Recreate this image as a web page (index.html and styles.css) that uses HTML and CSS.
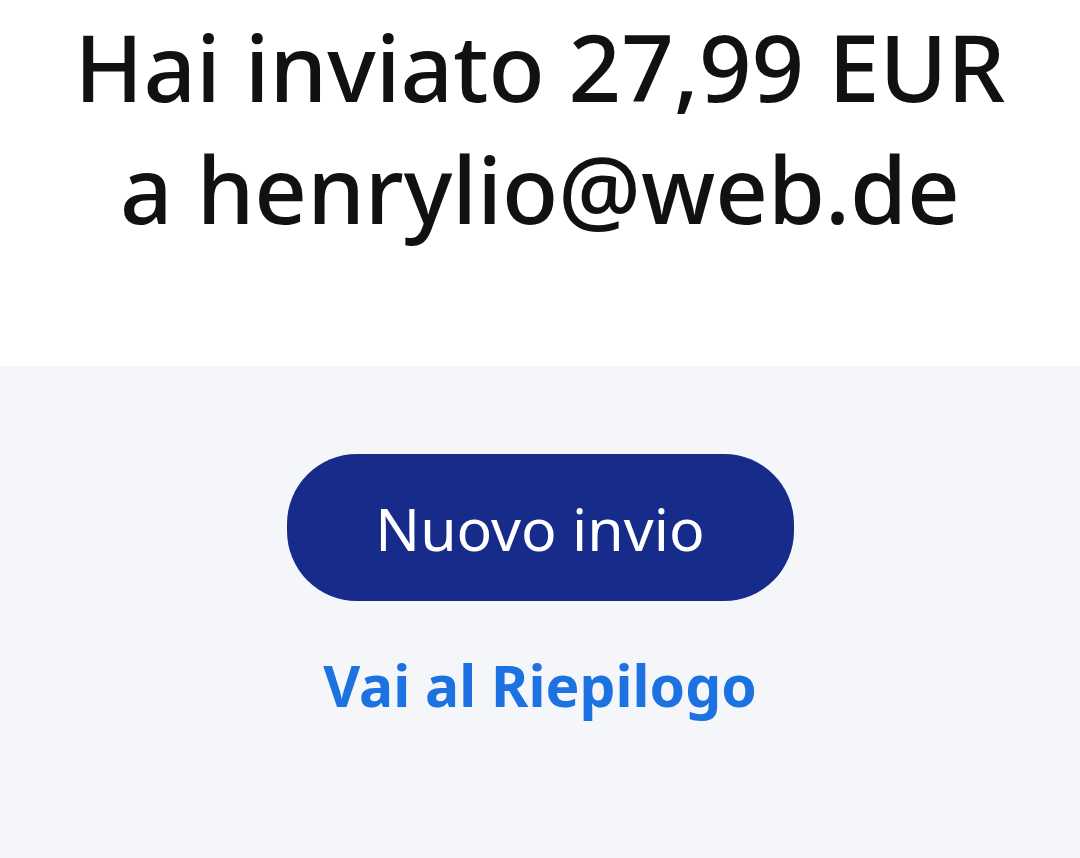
FILE: index.html
```html
<!DOCTYPE html>
<html lang="it">
<head>
    <meta charset="UTF-8">
    <meta name="viewport" content="width=device-width, initial-scale=1.0">
    <title>Invio completato</title>
    <link rel="stylesheet" href="styles.css">
</head>
<body>
    <div class="top">
        <h1 class="title">Hai inviato 27,99 EUR<br>a henrylio@web.de</h1>
    </div>
    <div class="actions">
        <button type="button" class="btn">Nuovo invio</button>
        <a href="#" class="link">Vai al Riepilogo</a>
    </div>
</body>
</html>
```

FILE: styles.css
```css
body {
    font-family: "Noto Sans", "Open Sans", sans-serif;
    margin: 0;
    height: 858px;
    display: flex;
    flex-direction: column;
    background-color: #f5f6fa;
}
.top {
    background-color: #ffffff;
    height: 366px;
    display: flex;
    justify-content: center;
}
.title {
    margin: 6px 0 0;
    font-size: 92px;
    font-weight: 500;
    line-height: 122px;
    color: #111111;
    text-align: center;
}
.actions {
    display: flex;
    flex-direction: column;
    align-items: center;
    padding-top: 88px;
}
.btn {
    width: 507px;
    height: 147px;
    border: none;
    border-radius: 70px;
    background-color: #172b8a;
    color: #ffffff;
    font-family: inherit;
    font-size: 59px;
    cursor: pointer;
}
.link {
    margin-top: 45px;
    color: #1b72e0;
    font-size: 57px;
    font-weight: 700;
    text-decoration: none;
}
```
